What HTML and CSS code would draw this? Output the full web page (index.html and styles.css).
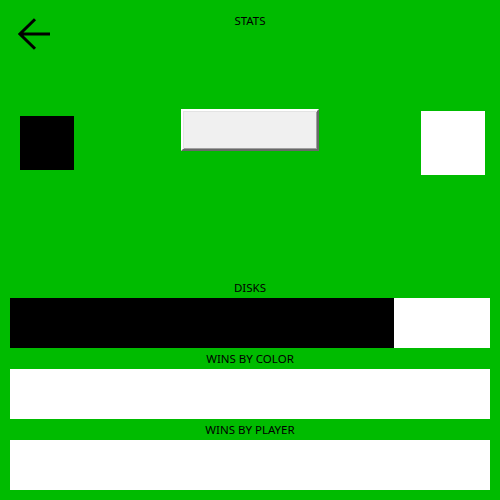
FILE: index.html
```html
<!DOCTYPE html>
<html>
<head>
<meta charset="utf-8">
<link rel="stylesheet" href="styles.css">
</head>
<body>
<div class="page">
  <header class="header">
    <svg class="back" viewBox="0 0 32 32" width="32" height="32">
      <path d="M17 1.2 L1.9 16 L17 30.8 M2 16 H32" fill="none" stroke="#000" stroke-width="3"/>
    </svg>
    <div class="title">STATS</div>
  </header>
  <div class="row">
    <div class="sq-black"></div>
    <button class="btn"></button>
    <div class="sq-white"></div>
  </div>
  <section class="stats">
    <div class="label">DISKS</div>
    <div class="bar">
      <div class="bar-black" style="width:384px"></div>
      <div class="bar-white"></div>
    </div>
    <div class="label">WINS BY COLOR</div>
    <div class="bar"><div class="bar-white"></div></div>
    <div class="label">WINS BY PLAYER</div>
    <div class="bar"><div class="bar-white"></div></div>
  </section>
</div>
</body>
</html>
```
FILE: styles.css
```css
html, body {
  margin: 0;
  padding: 0;
}
body {
  background: #00bb00;
  font-family: "Noto Sans", "Open Sans", sans-serif;
  font-size: 11.5px;
  color: #000;
}
.page {
  width: 500px;
  height: 500px;
  display: flex;
  flex-direction: column;
}
.header {
  display: grid;
  grid-template-columns: 1fr auto 1fr;
  align-items: start;
}
.back {
  display: block;
  margin: 18px 0 0 18px;
}
.title {
  margin-top: 13px;
  line-height: 16px;
}
.row {
  display: flex;
  align-items: flex-start;
  margin-top: 59px;
}
.sq-black {
  width: 54px;
  height: 54px;
  background: #000;
  margin: 7px 0 0 20px;
}
.btn {
  width: 138px;
  height: 42px;
  margin: 0 0 0 107px;
  padding: 0;
  background: #f0f0f0;
  border: 2px solid;
  border-color: #fff #696969 #696969 #fff;
  box-shadow: inset 1px 1px 0 #e3e3e3, inset -1px -1px 0 #a0a0a0;
  box-sizing: border-box;
}
.sq-white {
  width: 64px;
  height: 64px;
  background: #fff;
  margin: 2px 0 0 102px;
}
.stats {
  margin-top: auto;
  padding: 0 10px 10px;
}
.label {
  height: 21px;
  line-height: 21px;
  text-align: center;
}
.bar {
  height: 50px;
  display: flex;
}
.bar-black {
  background: #000;
}
.bar-white {
  flex: 1;
  background: #fff;
}
```
